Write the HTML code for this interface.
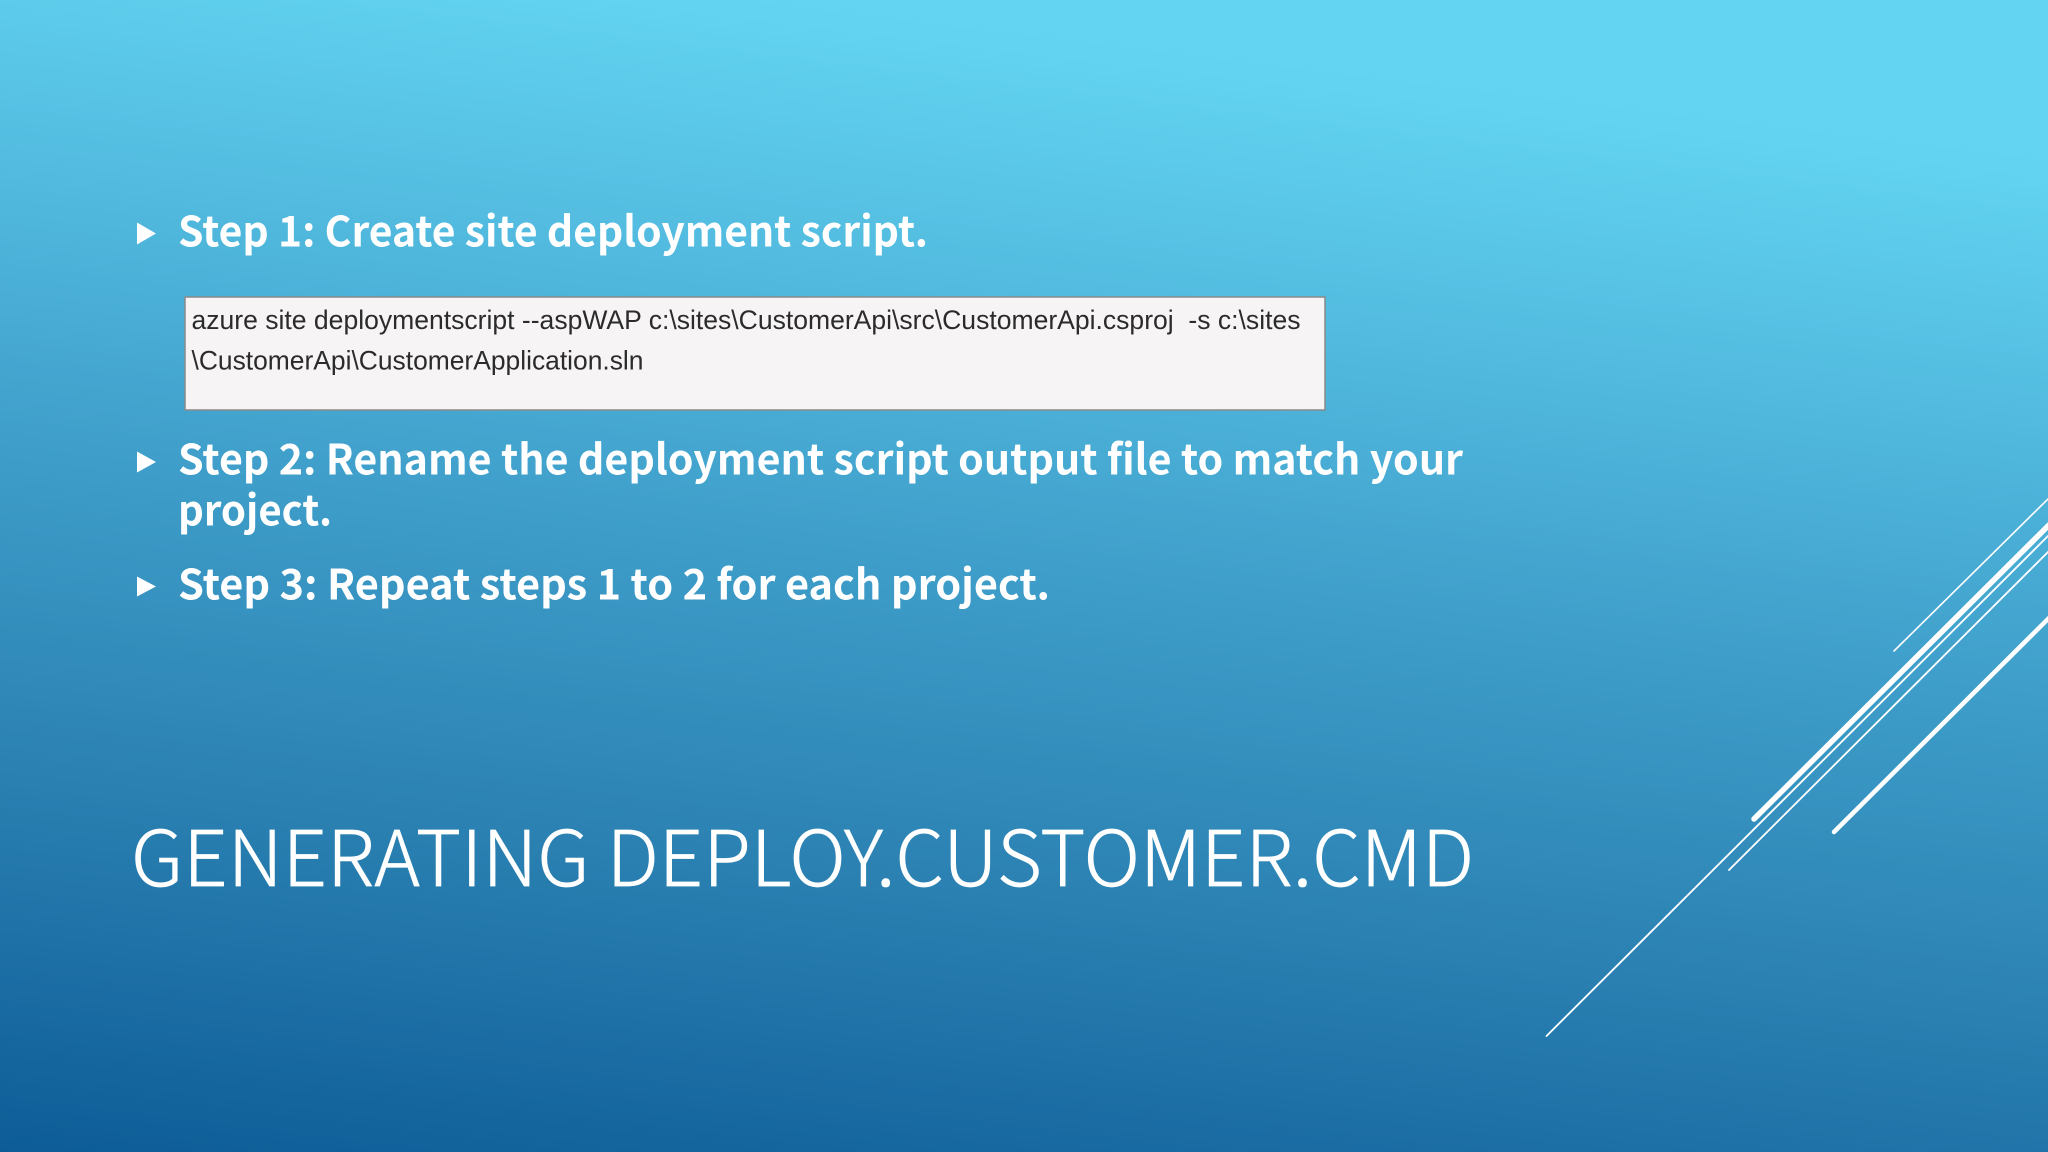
<!DOCTYPE html>
<html><head><meta charset="utf-8"><style>
html,body{margin:0;padding:0;width:2048px;height:1152px;overflow:hidden;background:#2a85b5}
svg{display:block}
.b{font-family:"Noto Sans CJK JP","Liberation Sans",sans-serif;font-weight:700;font-size:42px;fill:#fff}
.t{font-family:"Noto Sans CJK JP","Liberation Sans",sans-serif;font-weight:300;font-size:77px;fill:#fff;stroke:#fff;stroke-width:.7px}
.c{font-family:"Liberation Sans",sans-serif;font-size:27px;fill:#2b2b2b}
</style></head><body>
<svg width="2048" height="1152" viewBox="0 0 2048 1152" xmlns="http://www.w3.org/2000/svg">
<defs><linearGradient id="g" gradientUnits="userSpaceOnUse" x1="783" y1="0" x2="632" y2="1231">
<stop offset="0" stop-color="#63d5f2"/>
<stop offset=".2" stop-color="#53bce0"/>
<stop offset=".44" stop-color="#3e9dc9"/>
<stop offset=".7" stop-color="#2a80b1"/>
<stop offset="1" stop-color="#0d5c98"/>
</linearGradient></defs>
<rect width="2048" height="1152" fill="url(#g)"/>
<g stroke="#fff" fill="none" stroke-linecap="round">
<path d="M1546.5 1036L2050 534" stroke-width="1.8"/>
<path d="M1754 819L2050 524" stroke-width="5.5"/>
<path d="M1729 870L2050 550" stroke-width="1.8"/>
<path d="M1834 832L2050 617" stroke-width="4.5"/>
<path d="M1894 651L2050 497" stroke-width="1.6"/>
</g>
<path d="M137 222.5L156 233.5L137 244.5Z M137 451.5L156 462L137 472.5Z M137 576.5L156 586.5L137 596.5Z" fill="#fff"/>
<text class="b" x="178" y="246.5" textLength="750" lengthAdjust="spacingAndGlyphs">Step 1: Create site deployment script.</text>
<text class="b" x="178" y="474.5" textLength="1285" lengthAdjust="spacingAndGlyphs">Step 2: Rename the deployment script output file to match your</text>
<text class="b" x="178" y="525.5" textLength="154" lengthAdjust="spacingAndGlyphs">project.</text>
<text class="b" x="178" y="599.5" textLength="872" lengthAdjust="spacingAndGlyphs">Step 3: Repeat steps 1 to 2 for each project.</text>
<rect x="185" y="297" width="1140" height="113" fill="#f6f4f5" stroke="#8a8a8a" stroke-width="1.5"/>
<text class="c" x="191.5" y="329" textLength="1109" lengthAdjust="spacingAndGlyphs" xml:space="preserve">azure site deploymentscript --aspWAP c:\sites\CustomerApi\src\CustomerApi.csproj  -s c:\sites</text>
<text class="c" x="191.5" y="369.5" textLength="452" lengthAdjust="spacingAndGlyphs">\CustomerApi\CustomerApplication.sln</text>
<text class="t" x="131" y="886" textLength="1343" lengthAdjust="spacingAndGlyphs">GENERATING DEPLOY.CUSTOMER.CMD</text>
</svg>
</body></html>
